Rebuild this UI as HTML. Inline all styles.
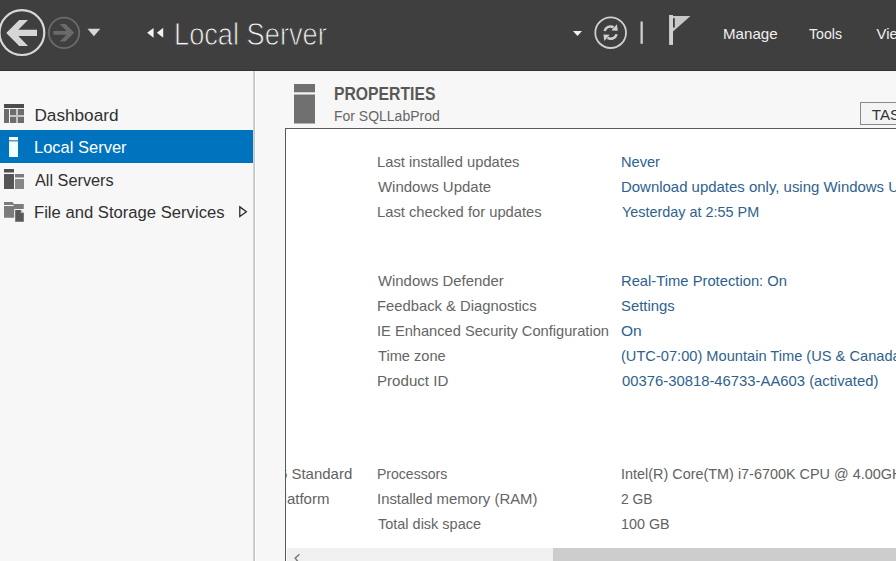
<!DOCTYPE html>
<html><head><meta charset="utf-8">
<style>
*{margin:0;padding:0;box-sizing:border-box}
html,body{width:896px;height:561px;overflow:hidden;background:#f7f7f7;font-family:"Liberation Sans",sans-serif}
.abs{position:absolute}
#hdr{position:absolute;left:0;top:0;width:896px;height:71px;background:#3f3f3f}
#hdr .line{position:absolute;left:0;top:70px;width:896px;height:1px;background:#333}
.t{position:absolute;white-space:nowrap;line-height:1;transform-origin:0 0}
#navborder{position:absolute;left:253px;top:71px;width:3px;height:490px;background:linear-gradient(to right,#d2d2d2 0,#d2d2d2 1px,#c6c6c6 1px,#c6c6c6 2px,#fcfcfc 2px)}
.sel{position:absolute;left:0;top:130px;width:253px;height:33px;background:#0073bf}
#box{position:absolute;left:285px;top:128px;width:700px;height:500px;background:#fff;border:1px solid #5a5a5a}
#boxin{position:absolute;left:286px;top:129px;width:610px;height:432px;overflow:hidden}
#track{position:absolute;left:1px;top:419px;width:610px;height:20px;background:#f0f0f0}
#thumb{position:absolute;left:267px;top:419px;width:400px;height:20px;background:#cdcdcd}
</style></head><body>
<div id="hdr">
  <svg class="abs" style="left:0;top:0" width="896" height="71">
    <!-- back -->
    <circle cx="21.9" cy="32.6" r="22.4" fill="none" stroke="#d8d8d8" stroke-width="2.2"/>
    <path d="M6.2 33 L19.2 20 H28 L18.3 29.8 H37 V36.1 H18.3 L28 45.9 H19.2 Z" fill="#d6d6d6"/>
    <!-- forward -->
    <circle cx="64" cy="32.85" r="15.2" fill="none" stroke="#6a6a6a" stroke-width="1.8"/>
    <path d="M74.3 32.8 L65.4 24.1 H59.7 L66.5 30.9 H53.3 V34.7 H66.5 L59.7 41.6 H65.4 Z" fill="#6a6a6a"/>
    <path d="M87.5 28.75 H100.3 L93.9 36.2 Z" fill="#d8d8d8"/>
    <!-- chevrons -->
    <path d="M147.1 32.8 L153.6 27.9 V37.8 Z M156.9 32.8 L163.2 27.8 V37.8 Z" fill="#f2f2f2"/>
    <!-- dropdown -->
    <path d="M573 31 H582 L577.5 36 Z" fill="#f0f0f0"/>
    <!-- refresh -->
    <circle cx="610.65" cy="32.65" r="15.35" fill="none" stroke="#cfcfcf" stroke-width="1.8"/>
    <g fill="#cfcfcf">
      <path d="M604.6 31 A6 6 0 0 1 613.6 27.4" fill="none" stroke="#cfcfcf" stroke-width="2.6"/>
      <path d="M616.9 24.2 L617.8 30.8 L611.4 30.4 Z"/>
      <g transform="rotate(180 610.6 32.6)">
        <path d="M604.6 31 A6 6 0 0 1 613.6 27.4" fill="none" stroke="#cfcfcf" stroke-width="2.6"/>
        <path d="M616.9 24.2 L617.8 30.8 L611.4 30.4 Z"/>
      </g>
    </g>
    <!-- separator -->
    <rect x="640.5" y="21.5" width="2.3" height="22.3" fill="#cfcfcf"/>
    <!-- flag -->
    <rect x="669.1" y="15" width="3.9" height="29.9" fill="#d0d0d0"/>
    <path d="M673 16.1 H690.5 L673 31.4 Z" fill="#c8c8c8"/>
    <rect x="673" y="18.2" width="1.8" height="9.3" fill="#3f3f3f"/>
  </svg>
  <div class="line"></div>
</div>

<div id="navborder"></div>
<div class="sel"></div>
<svg class="abs" style="left:0;top:0" width="253" height="561">
  <!-- dashboard icon -->
  <rect x="4" y="104" width="20" height="4" fill="#4d4d4d"/>
  <rect x="10" y="109" width="14" height="14" fill="#c4c4c4"/>
  <rect x="4" y="109" width="5" height="14" fill="#6d6d6d"/>
  <rect x="10" y="109" width="6" height="6" fill="#6d6d6d"/>
  <rect x="18" y="109" width="6" height="6" fill="#6d6d6d"/>
  <rect x="10" y="117" width="6" height="6" fill="#6d6d6d"/>
  <rect x="18" y="117" width="6" height="6" fill="#6d6d6d"/>
  <!-- local server icon -->
  <rect x="9" y="137" width="9" height="5" fill="#6f8fb0"/>
  <rect x="9" y="137" width="9" height="3" fill="#f0ffff"/>
  <rect x="9" y="141.5" width="9" height="15.5" fill="#f0ffff"/>
  <!-- all servers -->
  <rect x="4" y="169" width="10" height="3.5" fill="#505050"/>
  <rect x="4" y="174" width="10" height="15" fill="#555"/>
  <rect x="15" y="174" width="9" height="3.5" fill="#7c7c7c"/>
  <rect x="15" y="179" width="9" height="10" fill="#878787"/>
  <!-- file and storage -->
  <path d="M4 202 H12.6 L13.9 203.9 H23.8 V209 H14.2 V217.8 H4 Z" fill="#7c7c7c"/>
  <rect x="4" y="205" width="9.5" height="1" fill="#f7f7f7"/>
  <path d="M15.2 210 H20.8 L23.8 213 V221.8 H15.2 Z" fill="#595959"/>
  <path d="M20.8 210 V213 H23.8 Z" fill="#bdbdbd"/>
  <!-- arrow -->
  <path d="M239.8 206.9 L246.4 211.7 L239.8 216.5 Z" fill="none" stroke="#2a2a2a" stroke-width="1.3"/>
</svg>

<!-- properties header -->
<svg class="abs" style="left:0;top:0" width="896" height="130">
  <rect x="294" y="84" width="21" height="8.3" fill="#707070"/>
  <rect x="294" y="94.5" width="21" height="29" fill="#707070"/>
</svg>
<div class="abs" style="left:860px;top:102px;width:60px;height:23px;border:1px solid #8a8a8a;background:#f4f4f4"></div>

<div id="box"></div>
<div id="boxin">
<div class="t" style="left:91.15px;top:25px;font-size:15px;font-weight:400;color:#656565;transform:scaleX(0.9817);">Last installed updates</div>
<div class="t" style="left:92.14px;top:50px;font-size:15px;font-weight:400;color:#656565;transform:scaleX(0.9976);">Windows Update</div>
<div class="t" style="left:91.15px;top:75px;font-size:15px;font-weight:400;color:#656565;transform:scaleX(0.9821);">Last checked for updates</div>
<div class="t" style="left:335.46px;top:25px;font-size:15px;font-weight:400;color:#2e628e;transform:scaleX(0.9744);">Never</div>
<div class="t" style="left:334.94px;top:50px;font-size:15px;font-weight:400;color:#2e628e;transform:scaleX(0.9964);">Download updates only, using Windows Update</div>
<div class="t" style="left:335.9px;top:75px;font-size:15px;font-weight:400;color:#2e628e;transform:scaleX(0.9605);">Yesterday at 2:55 PM</div>
<div class="t" style="left:92.14px;top:144px;font-size:15px;font-weight:400;color:#656565;transform:scaleX(0.9918);">Windows Defender</div>
<div class="t" style="left:91.15px;top:169px;font-size:15px;font-weight:400;color:#656565;transform:scaleX(0.9867);">Feedback &amp; Diagnostics</div>
<div class="t" style="left:91.14px;top:194px;font-size:15px;font-weight:400;color:#656565;transform:scaleX(0.9761);">IE Enhanced Security Configuration</div>
<div class="t" style="left:92.11px;top:219px;font-size:15px;font-weight:400;color:#656565;transform:scaleX(0.9750);">Time zone</div>
<div class="t" style="left:91.13px;top:244px;font-size:15px;font-weight:400;color:#656565;transform:scaleX(1.0065);">Product ID</div>
<div class="t" style="left:335.15px;top:144px;font-size:15px;font-weight:400;color:#2e628e;transform:scaleX(0.9841);">Real-Time Protection: On</div>
<div class="t" style="left:335.23px;top:169px;font-size:15px;font-weight:400;color:#2e628e;transform:scaleX(0.9914);">Settings</div>
<div class="t" style="left:335.34px;top:194px;font-size:15px;font-weight:400;color:#2e628e;transform:scaleX(1.0366);">On</div>
<div class="t" style="left:335.24px;top:219px;font-size:15px;font-weight:400;color:#2e628e;transform:scaleX(0.9752);">(UTC-07:00) Mountain Time (US &amp; Canada)</div>
<div class="t" style="left:336.1px;top:244px;font-size:15px;font-weight:400;color:#2e628e;transform:scaleX(0.9885);">00376-30818-46733-AA603 (activated)</div>
<div class="t" style="left:91.2px;top:337px;font-size:15px;font-weight:400;color:#656565;transform:scaleX(0.9359);">Processors</div>
<div class="t" style="left:91.12px;top:362px;font-size:15px;font-weight:400;color:#656565;transform:scaleX(0.9920);">Installed memory (RAM)</div>
<div class="t" style="left:92.11px;top:387px;font-size:15px;font-weight:400;color:#656565;transform:scaleX(0.9652);">Total disk space</div>
<div class="t" style="left:334.95px;top:337px;font-size:15px;font-weight:400;color:#626262;transform:scaleX(0.9607);">Intel(R) Core(TM) i7-6700K CPU @ 4.00GHz</div>
<div class="t" style="left:335.21px;top:362px;font-size:15px;font-weight:400;color:#626262;transform:scaleX(0.9230);">2 GB</div>
<div class="t" style="left:335.01px;top:387px;font-size:15px;font-weight:400;color:#626262;transform:scaleX(0.9551);">100 GB</div>
<div class="t" style="left:-210.5px;top:337px;font-size:15px;font-weight:400;color:#626262;">Microsoft Windows Server 2016 Standard</div>
<div class="t" style="left:-118.01px;top:362px;font-size:15px;font-weight:400;color:#626262;">VMware Virtual Platform</div>
<div id="track"></div>
<div id="thumb"></div>
<svg class="abs" style="left:0;top:419px" width="30" height="20"><path d="M13.5 6.2 L9.2 10.2 L11.8 13.5" fill="none" stroke="#7a7a7a" stroke-width="1.5"/></svg>
</div>
<div class="t" style="left:174.35px;top:19px;font-size:31px;font-weight:400;color:#f4f4f4;transform:scaleX(0.8778);-webkit-text-stroke:0.9px #3f3f3f;">Local Server</div>
<div class="t" style="left:722.52px;top:27px;font-size:14.8px;font-weight:400;color:#f0f0f0;transform:scaleX(1.0228);">Manage</div>
<div class="t" style="left:809.22px;top:27px;font-size:14.8px;font-weight:400;color:#f0f0f0;transform:scaleX(0.9582);">Tools</div>
<div class="t" style="left:876.54px;top:27px;font-size:14.8px;font-weight:400;color:#f0f0f0;">View</div>
<div class="t" style="left:34.41px;top:107px;font-size:17.2px;font-weight:400;color:#303030;">Dashboard</div>
<div class="t" style="left:34.45px;top:139px;font-size:17.2px;font-weight:400;color:#ffffff;transform:scaleX(0.9599);">Local Server</div>
<div class="t" style="left:34.94px;top:171.5px;font-size:17.2px;font-weight:400;color:#303030;transform:scaleX(0.9465);">All Servers</div>
<div class="t" style="left:33.94px;top:204px;font-size:17.2px;font-weight:400;color:#303030;transform:scaleX(0.9681);">File and Storage Services</div>
<div class="t" style="left:334.26px;top:85px;font-size:18px;font-weight:700;color:#585858;transform:scaleX(0.8741);">PROPERTIES</div>
<div class="t" style="left:334.23px;top:108px;font-size:15.5px;font-weight:400;color:#666666;transform:scaleX(0.9021);">For SQLLabProd</div>
<div class="t" style="left:871.81px;top:107px;font-size:15.2px;font-weight:400;color:#333333;">TASKS</div>
</body></html>
